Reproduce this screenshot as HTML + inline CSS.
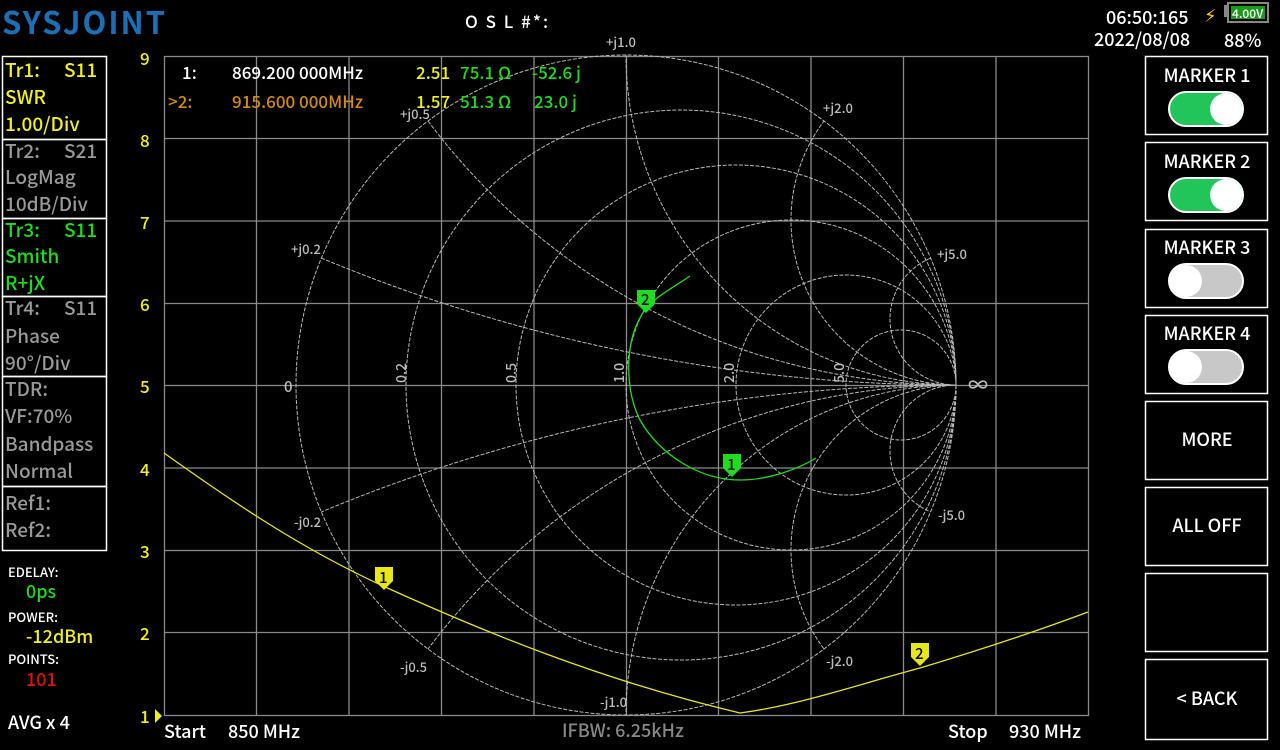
<!DOCTYPE html>
<html><head><meta charset="utf-8"><style>
html,body{margin:0;padding:0;background:#000;width:1280px;height:750px;overflow:hidden}
svg{position:absolute;left:0;top:0}
text{font-family:"Noto Sans CJK SC","DejaVu Sans",sans-serif;font-weight:500}
</style></head><body>
<svg width="1280" height="750" viewBox="0 0 1280 750" xmlns="http://www.w3.org/2000/svg">
<rect width="1280" height="750" fill="#000"/>
<text x="2" y="34" font-size="31" font-weight="bold" fill="#1a6fb5" letter-spacing="2" font-family="Liberation Sans,sans-serif" style="font-weight:bold">SYSJOINT</text>
<text x="465" y="28" font-size="17" fill="#fff" letter-spacing="2">O S L #*:</text>
<text x="1106" y="24" font-size="18" fill="#fff">06:50:165</text>
<text x="1204" y="22" font-size="18" fill="#f5d200">⚡</text>
<rect x="1224" y="5" width="4" height="12" fill="#888"/>
<rect x="1228" y="3" width="40" height="19" fill="none" stroke="#888" stroke-width="2"/>
<rect x="1231" y="6" width="34" height="13" fill="#1a9a1a"/>
<text x="1232" y="18" font-size="12" fill="#fff">4.00V</text>
<text x="1094" y="46" font-size="18" fill="#fff">2022/08/08</text>
<text x="1224" y="47" font-size="18" fill="#fff">88%</text>
<g fill="none" stroke="#fff" stroke-width="1.5">
<rect x="2.5" y="56.5" width="104" height="83"/>
<rect x="2.5" y="139.5" width="104" height="79"/>
<rect x="2.5" y="218.5" width="104" height="78"/>
<rect x="2.5" y="296.5" width="104" height="80"/>
<rect x="2.5" y="376.5" width="104" height="110"/>
<rect x="2.5" y="486.5" width="104" height="64"/>
</g>
<g font-size="19">
<text x="5" y="77" fill="#f0f020">Tr1:<tspan x="64">S11</tspan></text>
<text x="5" y="104" fill="#f0f020">SWR</text>
<text x="5" y="131" fill="#f0f020">1.00/Div</text>
<text x="5" y="158" fill="#999">Tr2:<tspan x="64">S21</tspan></text>
<text x="5" y="184" fill="#999">LogMag</text>
<text x="5" y="211" fill="#999">10dB/Div</text>
<text x="5" y="237" fill="#1fdc1f">Tr3:<tspan x="64">S11</tspan></text>
<text x="5" y="263" fill="#1fdc1f">Smith</text>
<text x="5" y="290" fill="#1fdc1f">R+jX</text>
<text x="5" y="315" fill="#999">Tr4:<tspan x="64">S11</tspan></text>
<text x="5" y="343" fill="#999">Phase</text>
<text x="5" y="370" fill="#999">90°/Div</text>
<text x="5" y="396" fill="#999">TDR:</text>
<text x="5" y="423" fill="#999">VF:70%</text>
<text x="5" y="451" fill="#999">Bandpass</text>
<text x="5" y="478" fill="#999">Normal</text>
<text x="5" y="510" fill="#999">Ref1:</text>
<text x="5" y="537" fill="#999">Ref2:</text>
</g>
<text x="8" y="577" font-size="13" fill="#fff">EDELAY:</text>
<text x="26" y="598" font-size="18" fill="#1fdc1f">0ps</text>
<text x="8" y="622" font-size="13" fill="#fff">POWER:</text>
<text x="26" y="643" font-size="18" fill="#f0f020">-12dBm</text>
<text x="8" y="664" font-size="13" fill="#fff">POINTS:</text>
<text x="26" y="686" font-size="18" fill="#e01010">101</text>
<text x="8" y="729" font-size="18" fill="#fff">AVG x 4</text>
<g font-size="17" fill="#f0f020">
<text x="140" y="65">9</text><text x="140" y="147">8</text><text x="140" y="229">7</text>
<text x="140" y="311">6</text><text x="140" y="393">5</text><text x="140" y="476">4</text>
<text x="140" y="558">3</text><text x="140" y="640">2</text><text x="140" y="723">1</text>
</g>
<polygon points="155,709 162,716 155,723" fill="#f0f020"/>
<g stroke="#8a8a8a" stroke-width="1.3" fill="none">
<rect x="164.5" y="56.5" width="924" height="659"/>
<path d="M256.5 56V716M349 56V716M441.5 56V716M534 56V716M626.5 56V716M718.5 56V716M811 56V716M903.5 56V716M996 56V716"/>
<path d="M164 138.5H1088M164 221H1088M164 303.5H1088M164 385.5H1088M164 468H1088M164 550.5H1088M164 632.5H1088"/>
</g>
<defs><clipPath id="c"><circle cx="626" cy="385" r="330"/></clipPath></defs>
<g stroke="#b8b8b8" stroke-width="1" fill="none" stroke-dasharray="4 1.5">
<circle cx="626" cy="385" r="330"/>
<circle cx="681" cy="385" r="275"/>
<circle cx="736" cy="385" r="220"/>
<circle cx="791" cy="385" r="165"/>
<circle cx="846" cy="385" r="110"/>
<circle cx="901" cy="385" r="55"/>
<g clip-path="url(#c)">
<circle cx="956" cy="-1265" r="1650"/><circle cx="956" cy="2035" r="1650"/>
<circle cx="956" cy="-275" r="660"/><circle cx="956" cy="1045" r="660"/>
<circle cx="956" cy="55" r="330"/><circle cx="956" cy="715" r="330"/>
<circle cx="956" cy="220" r="165"/><circle cx="956" cy="550" r="165"/>
<circle cx="956" cy="319" r="66"/><circle cx="956" cy="451" r="66"/>
</g>
</g>
<g font-size="13" fill="#bbb">
<text x="606" y="47">+j1.0</text>
<text x="823" y="113">+j2.0</text>
<text x="400" y="119">+j0.5</text>
<text x="291" y="254">+j0.2</text>
<text x="937" y="259">+j5.0</text>
<text x="294" y="527">-j0.2</text>
<text x="938" y="520">-j5.0</text>
<text x="400" y="672">-j0.5</text>
<text x="826" y="666">-j2.0</text>
<text x="600" y="707">-j1.0</text>
<text x="284" y="392" font-size="15">0</text>
<text x="968" y="392" font-size="20">∞</text>
<text transform="translate(406,383) rotate(-90)" font-size="14">0.2</text>
<text transform="translate(516,383) rotate(-90)" font-size="14">0.5</text>
<text transform="translate(624,383) rotate(-90)" font-size="14">1.0</text>
<text transform="translate(734,383) rotate(-90)" font-size="14">2.0</text>
<text transform="translate(844,383) rotate(-90)" font-size="14">5.0</text>
</g>
<path d="M690 276 C670 290 648 300 640 318 C625 345 625 390 640 420 C660 455 700 480 740 480 C770 480 800 468 816 458" fill="none" stroke="#1fdc1f" stroke-width="1.3"/>
<path d="M164 453 C230 500 300 548 383 586 C480 630 600 680 740 713 C800 705 860 684 920 668 C980 650 1040 630 1088 612" fill="none" stroke="#e6e61a" stroke-width="1.3"/>
<g>
<path d="M637 290h18v14l-9 9l-9-9z" fill="#1fdc1f"/><text x="641" y="305" font-size="15" fill="#000">2</text>
<path d="M723 454h18v14l-9 9l-9-9z" fill="#1fdc1f"/><text x="727" y="470" font-size="15" fill="#000">1</text>
<path d="M375 567h18v14l-9 9l-9-9z" fill="#e6e61a"/><text x="379" y="583" font-size="15" fill="#000">1</text>
<path d="M911 643h18v14l-9 9l-9-9z" fill="#e6e61a"/><text x="915" y="659" font-size="15" fill="#000">2</text>
</g>
<g font-size="17">
<text x="182" y="79" fill="#fff">1:</text>
<text x="232" y="79" fill="#fff">869.200 000MHz</text>
<text x="416" y="79" fill="#f0f020">2.51</text>
<text x="460" y="79" fill="#1fdc1f">75.1 Ω</text>
<text x="532" y="79" fill="#1fdc1f">-52.6 j</text>
<text x="168" y="108" fill="#d08a1a">&gt;2:</text>
<text x="232" y="108" fill="#d08a1a">915.600 000MHz</text>
<text x="416" y="108" fill="#f0f020">1.57</text>
<text x="460" y="108" fill="#1fdc1f">51.3 Ω</text>
<text x="534" y="108" fill="#1fdc1f">23.0 j</text>
</g>
<text x="164" y="738" font-size="18" fill="#fff">Start<tspan x="228">850 MHz</tspan></text>
<text x="562" y="737" font-size="18" fill="#888">IFBW: 6.25kHz</text>
<text x="948" y="738" font-size="18" fill="#fff">Stop<tspan x="1009">930 MHz</tspan></text>
<g fill="none" stroke="#fff" stroke-width="1.5">
<rect x="1145.5" y="56.5" width="122" height="78"/>
<rect x="1145.5" y="142.5" width="122" height="78"/>
<rect x="1145.5" y="229.5" width="122" height="78"/>
<rect x="1145.5" y="315.5" width="122" height="78"/>
<rect x="1145.5" y="401.5" width="122" height="78"/>
<rect x="1145.5" y="487.5" width="122" height="78"/>
<rect x="1145.5" y="573.5" width="122" height="78"/>
<rect x="1145.5" y="659.5" width="122" height="80"/>
</g>
<g font-size="18" fill="#fff" text-anchor="middle">
<text x="1207" y="82">MARKER 1</text>
<text x="1207" y="168">MARKER 2</text>
<text x="1207" y="254">MARKER 3</text>
<text x="1207" y="340">MARKER 4</text>
<text x="1207" y="446">MORE</text>
<text x="1207" y="532">ALL OFF</text>
<text x="1207" y="705">&lt; BACK</text>
</g>
<g>
<rect x="1169" y="92" width="74" height="34" rx="17" fill="#22c55a" stroke="#fff" stroke-width="2"/><circle cx="1226" cy="109" r="16" fill="#fff"/>
<rect x="1169" y="178" width="74" height="34" rx="17" fill="#22c55a" stroke="#fff" stroke-width="2"/><circle cx="1226" cy="195" r="16" fill="#fff"/>
<rect x="1169" y="264" width="74" height="34" rx="17" fill="#c8c8c8" stroke="#fff" stroke-width="2"/><circle cx="1186" cy="281" r="16" fill="#fff"/>
<rect x="1169" y="350" width="74" height="34" rx="17" fill="#c8c8c8" stroke="#fff" stroke-width="2"/><circle cx="1186" cy="367" r="16" fill="#fff"/>
</g>
</svg>
</body></html>
